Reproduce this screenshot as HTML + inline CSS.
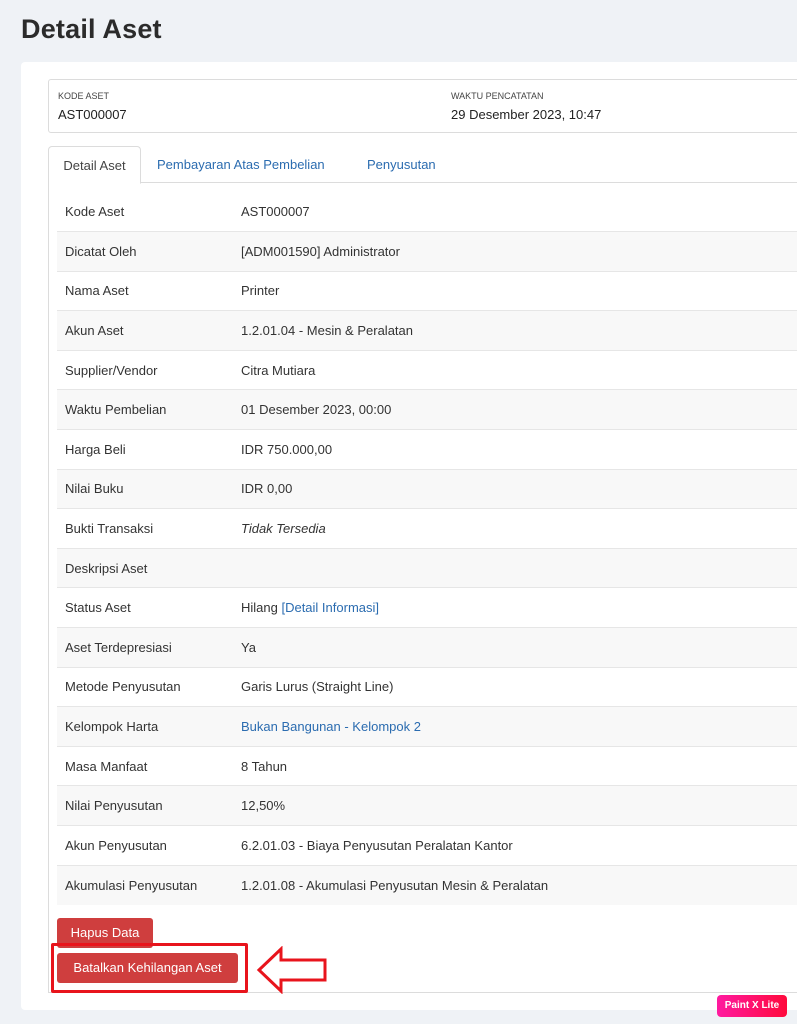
<!DOCTYPE html>
<html><head><style>
*{box-sizing:border-box;margin:0;padding:0}
body{width:797px;height:1024px;background:#eff2f6;font-family:"Liberation Sans",sans-serif;color:#333;position:relative;overflow:hidden}
h1{position:absolute;left:21px;top:14px;font-size:27px;font-weight:bold;color:#2b2b2b;letter-spacing:0.2px}
.card{position:absolute;left:21px;top:62px;width:800px;height:948px;background:#fff;border-radius:4px}
.info{position:absolute;left:48px;top:79px;width:760px;height:54px;border:1px solid #dcdcdc;border-radius:3px}
.lbl{position:absolute;font-size:9px;color:#444;top:11px}
.val{position:absolute;font-size:13px;color:#222;top:27px}
.tabs{position:absolute;left:48px;top:146px;width:760px;height:37px;border-bottom:1px solid #dcdcdc}
.tab{position:absolute;top:0;height:37px;line-height:37px;font-size:13px;color:#2b6cb0}
.tab.act{left:0;width:93px;border:1px solid #dcdcdc;border-bottom:1px solid #fff;border-radius:4px 4px 0 0;color:#444;text-align:center;height:38px;background:#fff}
.content{position:absolute;left:48px;top:183px;width:760px;height:810px;border-left:1px solid #dcdcdc;border-bottom:1px solid #dcdcdc}
table{position:absolute;left:8px;top:9px;width:760px;border-collapse:collapse}
td{height:39.6px;font-size:13px;color:#333;border-top:1px solid #e6e6e6;vertical-align:middle}
tr:first-child td{border-top:none}
tr:nth-child(even) td{background:#f8f8f8}
td.k{width:184px;padding-left:8px}
a{color:#2b6cb0;text-decoration:none}
.btn{position:absolute;left:57px;background:#cf3e3e;color:#fff;font-size:13px;border-radius:3px;text-align:center}
</style></head><body>
<h1>Detail Aset</h1>
<div class="card"></div>
<div class="info">
<div class="lbl" style="left:9px">KODE ASET</div><div class="val" style="left:9px">AST000007</div>
<div class="lbl" style="left:402px">WAKTU PENCATATAN</div><div class="val" style="left:402px">29 Desember 2023, 10:47</div>
</div>
<div class="tabs">
<div class="tab act">Detail Aset</div>
<div class="tab" style="left:109px">Pembayaran Atas Pembelian</div>
<div class="tab" style="left:319px">Penyusutan</div>
</div>
<div class="content">
<table>
<tr><td class="k">Kode Aset</td><td>AST000007</td></tr>
<tr><td class="k">Dicatat Oleh</td><td>[ADM001590] Administrator</td></tr>
<tr><td class="k">Nama Aset</td><td>Printer</td></tr>
<tr><td class="k">Akun Aset</td><td>1.2.01.04 - Mesin &amp; Peralatan</td></tr>
<tr><td class="k">Supplier/Vendor</td><td>Citra Mutiara</td></tr>
<tr><td class="k">Waktu Pembelian</td><td>01 Desember 2023, 00:00</td></tr>
<tr><td class="k">Harga Beli</td><td>IDR 750.000,00</td></tr>
<tr><td class="k">Nilai Buku</td><td>IDR 0,00</td></tr>
<tr><td class="k">Bukti Transaksi</td><td><i>Tidak Tersedia</i></td></tr>
<tr><td class="k">Deskripsi Aset</td><td></td></tr>
<tr><td class="k">Status Aset</td><td>Hilang <a>[Detail Informasi]</a></td></tr>
<tr><td class="k">Aset Terdepresiasi</td><td>Ya</td></tr>
<tr><td class="k">Metode Penyusutan</td><td>Garis Lurus (Straight Line)</td></tr>
<tr><td class="k">Kelompok Harta</td><td><a>Bukan Bangunan - Kelompok 2</a></td></tr>
<tr><td class="k">Masa Manfaat</td><td>8 Tahun</td></tr>
<tr><td class="k">Nilai Penyusutan</td><td>12,50%</td></tr>
<tr><td class="k">Akun Penyusutan</td><td>6.2.01.03 - Biaya Penyusutan Peralatan Kantor</td></tr>
<tr><td class="k">Akumulasi Penyusutan</td><td>1.2.01.08 - Akumulasi Penyusutan Mesin &amp; Peralatan</td></tr>
</table>
</div>
<div class="btn" style="top:918px;width:96px;height:30px;line-height:30px">Hapus Data</div>
<div style="position:absolute;left:51px;top:943px;width:197px;height:50px;border:3px solid #e8141c;border-radius:2px;background:transparent"></div>
<div class="btn" style="top:953px;width:181px;height:30px;line-height:30px">Batalkan Kehilangan Aset</div>
<svg style="position:absolute;left:255px;top:946px" width="76" height="48" viewBox="0 0 76 48"><path d="M4 24 L26 3 L26 14 L70 14 L70 34 L26 34 L26 45 Z" fill="#fff" stroke="#e8141c" stroke-width="3" stroke-linejoin="miter"/></svg>
<div style="position:absolute;left:717px;top:995px;width:70px;height:22px;border-radius:4px;background:linear-gradient(90deg,#ff1aa0,#ff0a3c);color:#fff;font-size:10px;font-weight:bold;line-height:22px;text-align:center">Paint X Lite</div>
</body></html>
